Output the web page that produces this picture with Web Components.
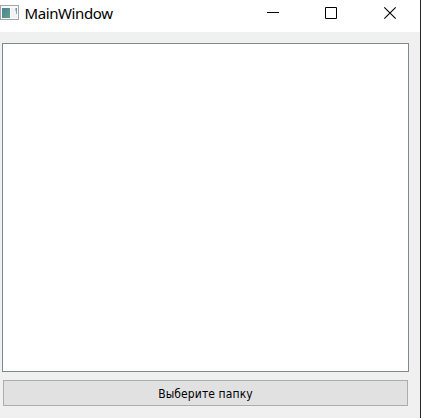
<!DOCTYPE html>
<html lang="ru">
<head>
<meta charset="utf-8">
<title>MainWindow</title>
<style>
html, body { margin: 0; height: 100%; overflow: hidden; }
</style>
</head>
<body>
<main-window><title-bar slot="title">MainWindow</title-bar><list-view></list-view><push-button>Выберите папку</push-button></main-window>
<script>
function define(name, html) {
  const template = document.createElement('template');
  template.innerHTML = html;
  customElements.define(name, class extends HTMLElement {
    constructor() {
      super();
      this.attachShadow({ mode: 'open' }).append(template.content.cloneNode(true));
    }
  });
}

define('window-icon', `
<style>
:host { display: block; width: 19px; height: 15px; flex: none; }
svg { display: block; }
</style>
<svg width="19" height="15" viewBox="0 0 19 15">
  <defs>
    <linearGradient id="g" x1="0" y1="0" x2="1" y2="1"><stop offset="0" stop-color="#4d7ea0"/><stop offset="1" stop-color="#5fa57c"/></linearGradient>
    <linearGradient id="h" x1="0" y1="0" x2="0" y2="1"><stop offset="0" stop-color="#5b93b5"/><stop offset="1" stop-color="#7cc09a"/></linearGradient>
  </defs>
  <rect x=".5" y=".5" width="18" height="14" fill="#fafafa" stroke="#a5a5a9"/>
  <rect x="2" y="3" width="8" height="10" fill="url(#g)"/>
  <rect x="11" y="3" width="6" height="10" fill="#f0f2f4"/>
  <path d="M15.5 3H17v6h-1V6h-.5z" fill="url(#h)"/>
</svg>`);

define('caption-buttons', `
<style>
:host { display: flex; align-items: center; gap: 45px; height: 13px; }
svg { display: block; width: 13px; height: 13px; }
</style>
<svg viewBox="0 0 13 13"><path d="M0 5.5h12" stroke="#000"/></svg>
<svg viewBox="0 0 13 13"><path d="M.5.5h11v11H.5z" fill="none" stroke="#000"/></svg>
<svg viewBox="0 0 13 13" overflow="visible"><path d="M1.3 .3l11.4 11.4M12.7 .3L1.3 11.7" stroke="#000" stroke-width="1.1"/></svg>`);

define('title-bar', `
<style>
:host { display: flex; align-items: flex-start; box-sizing: border-box; height: 32px; padding: 5px 24px 0 0; background: #fff;
  font: 15px/18px "Noto Sans", "Open Sans", sans-serif; color: #000; }
.caption { margin: -1px 0 0 5.5px; letter-spacing: -.4px; }
caption-buttons { margin: 2px 0 0 auto; }
</style>
<window-icon></window-icon><span class="caption"><slot></slot></span><caption-buttons></caption-buttons>`);

define('list-view', `
<style>
:host { display: block; box-sizing: border-box; height: 329px; border: 1px solid #828790; background: #fff; }
</style>`);

define('push-button', `
<style>
:host { display: flex; align-items: center; justify-content: center; box-sizing: border-box; height: 26px; margin: 0 1px;
  border: 1px solid #adadad; background: #e1e1e1; color: #000; font: 12px/16px "DejaVu Sans Condensed", "DejaVu Sans", sans-serif; }
span { padding-top: 1px; letter-spacing: .1px; }
</style>
<span><slot></slot></span>`);

define('main-window', `
<style>
:host { display: flex; flex-direction: column; box-sizing: border-box; width: 421px; height: 418px; border-right: 1px solid #25262a; background: #f0f0f0; }
.content { display: flex; flex-direction: column; gap: 8px; padding: 11px 11px 0 2px; }
</style>
<slot name="title"></slot>
<div class="content"><slot></slot></div>`);
</script>
</body>
</html>
